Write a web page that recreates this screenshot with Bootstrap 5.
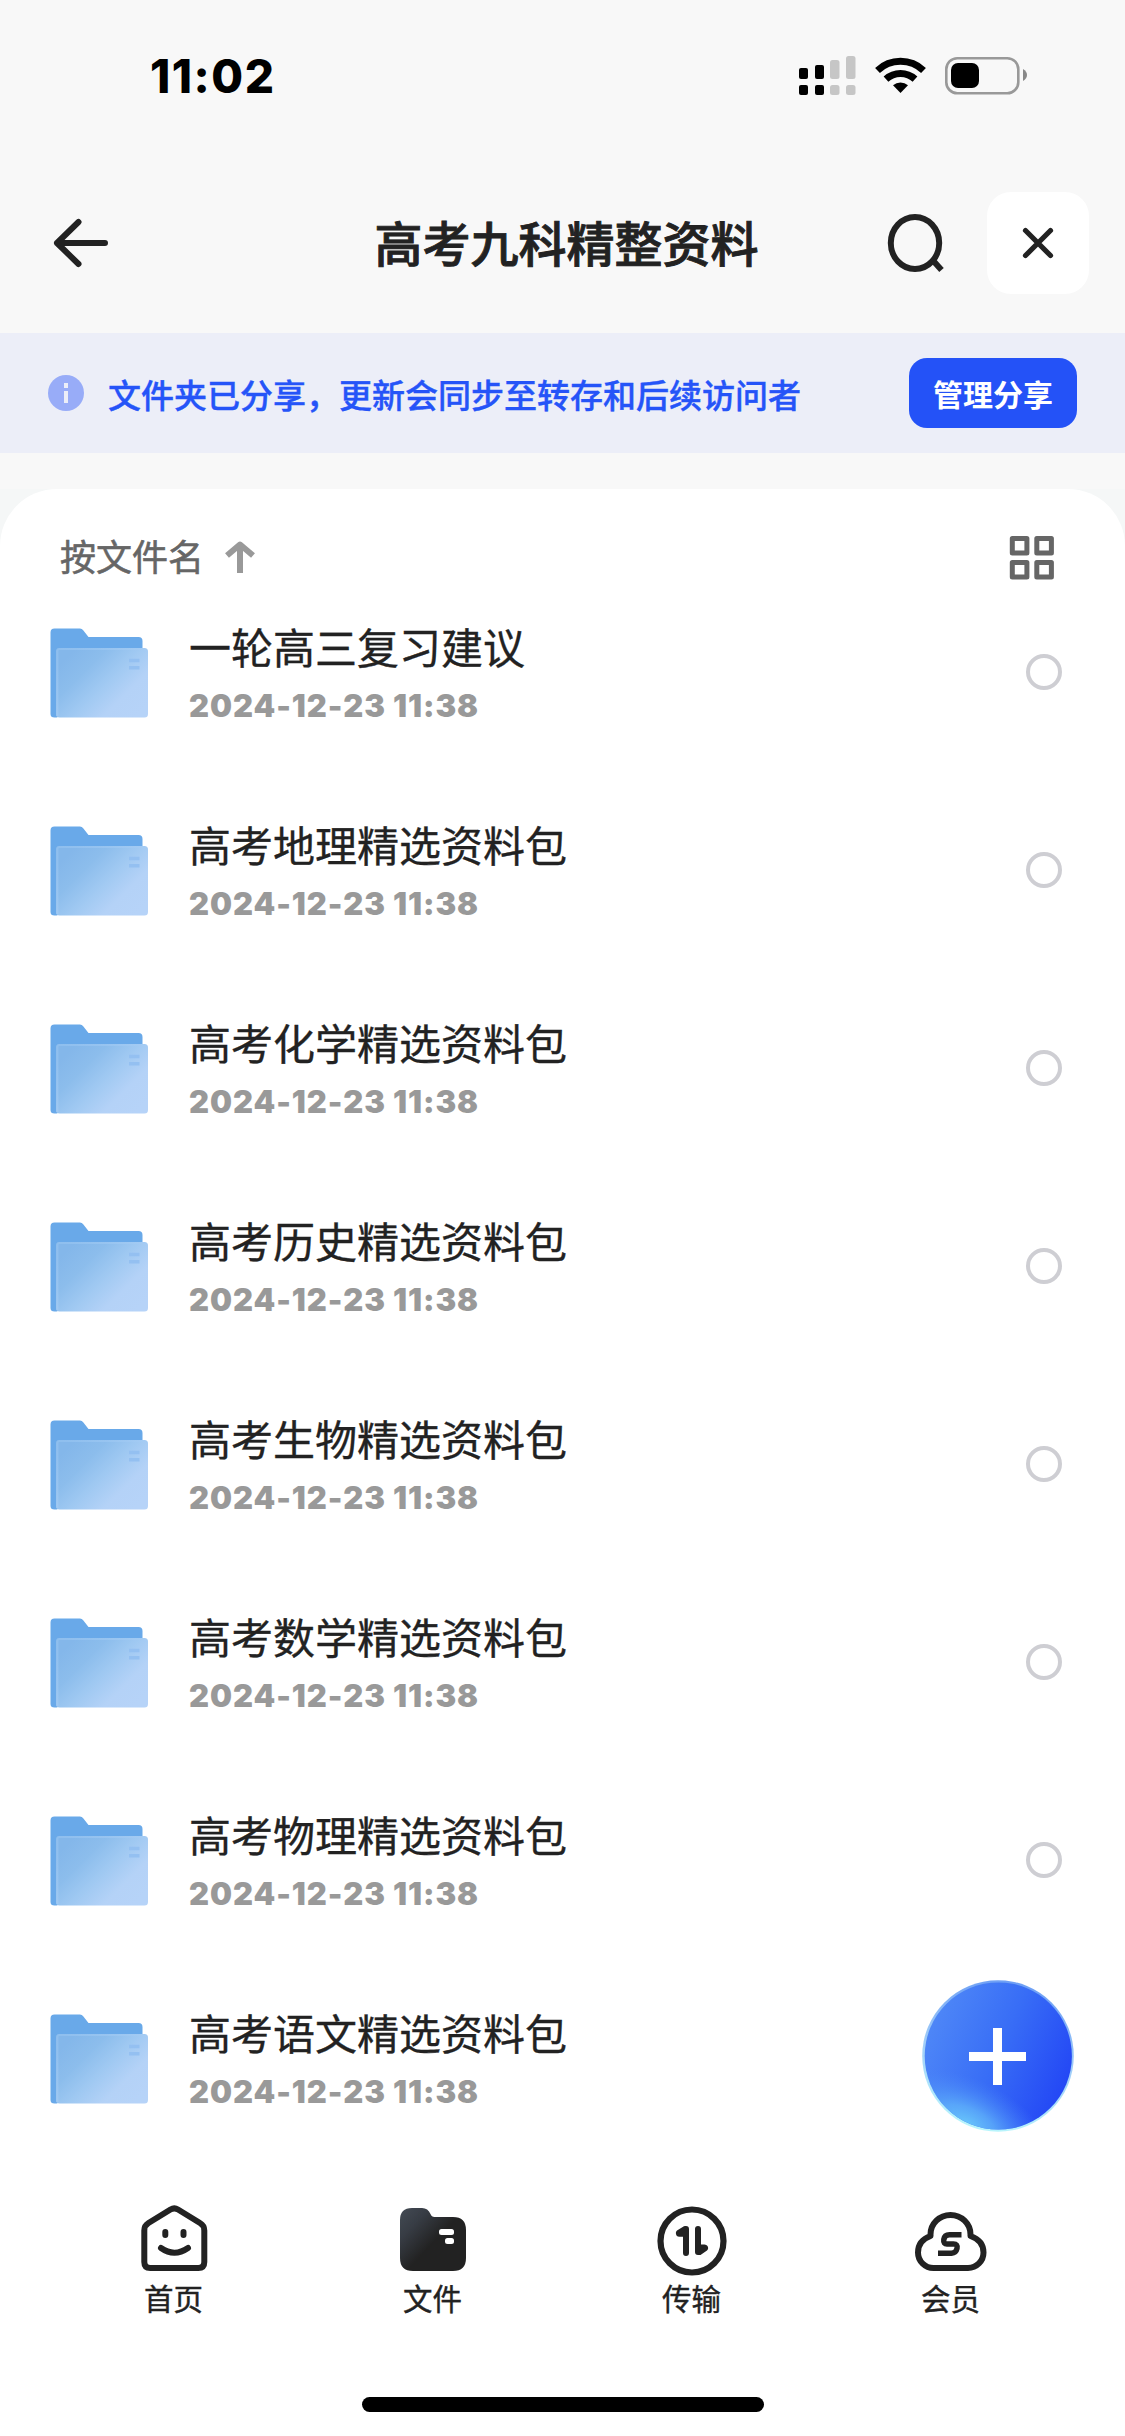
<!DOCTYPE html>
<html lang="zh-CN">
<head>
<meta charset="utf-8">
<meta name="viewport" content="width=device-width, initial-scale=1">
<title>高考九科精整资料</title>
<link href="https://cdn.jsdelivr.net/npm/bootstrap@5.3.0/dist/css/bootstrap.min.css" rel="stylesheet">
<style>
  body { font-family: "Noto Sans CJK SC", sans-serif; color: #222; background: #f8f8f8; }
  svg { display: block; flex: none; }
  .screen { width: 1125px; height: 2436px; overflow: hidden; }
  .status-bar { height: 153px; padding: 0 97px 0 150px; }
  .clock { font: 800 46px/60px Inter, sans-serif; color: #000; letter-spacing: 1.5px; padding-top: 46px; }
  .status-icons { height: 100px; padding-top: 52px; }
  .title-bar { height: 180px; padding: 0 36px 0 48px; }
  .title-text { font-size: 48px; line-height: 60px; font-weight: 500; margin-top: -5px; -webkit-text-stroke: .9px; }
  .close-btn { width: 102px; height: 102px; border-radius: 24px; }
  .side { width: 260px; }
  .side-right { width: 264px; }
  .share-bar { height: 120px; background: #eceef8; padding: 0 48px; color: #2554f8; }
  .share-text { font-size: 33px; line-height: 48px; font-weight: 500; margin: 1px 0 0 24px; -webkit-text-stroke: .4px; }
  .share-btn, .share-btn:hover { width: 168px; height: 70px; border-radius: 18px; background: #2452f7; color: #fff; border: 0; padding: 0; font-size: 30px; line-height: 64px; font-weight: 700; }
  .panel-wrap { margin-top: 36px; background: #f5f7f7; }
  .panel { border-radius: 57px 57px 0 0; height: 1947px; }
  .sort-bar { height: 85px; padding: 42px 70px 0 60px; }
  .sort-text { font-size: 36px; line-height: 48px; color: #666; margin-right: 19px; -webkit-text-stroke: .6px; }
  .file-row { height: 198px; padding: 0 63px 0 50px; }
  .file-text { margin-left: 41px; padding-top: 45px; }
  .file-name { font-size: 42px; line-height: 54px; color: #222; -webkit-text-stroke: .35px; }
  .file-date { font: 900 31px/36px Inter, sans-serif; color: #999; letter-spacing: .95px; margin-top: 15px; }
  .pick { width: 36px; height: 36px; border: 4px solid #ceced3; margin-top: -2px; }
  .fab { left: 922px; top: 1980px; }
  .tab-bar { padding: 0 45px 0 44px; }
  .tab { width: 259px; padding-top: 44px; }
  .tab-label { font-size: 29.500px; line-height: 40px; margin-top: -3px; -webkit-text-stroke: .4px; }
  .home-line { width: 402px; height: 15px; margin: 80px auto 0; }
</style>
</head>
<body>
<svg width="0" height="0" class="position-absolute">
  <defs>
    <linearGradient id="front" gradientUnits="userSpaceOnUse" x1="20" y1="26" x2="84" y2="90">
      <stop offset="0" stop-color="#84b7ea"/><stop offset=".25" stop-color="#8cbdec"/><stop offset=".5" stop-color="#a0c9f2"/><stop offset=".75" stop-color="#b4d2f7"/><stop offset="1" stop-color="#b6d3f8"/>
    </linearGradient>
    <linearGradient id="edge" x1="0" y1="0" x2="1" y2="1">
      <stop offset="0" stop-color="#93c2f0"/><stop offset="1" stop-color="#b4d4f7"/>
    </linearGradient>
    <symbol id="folder" viewBox="0 0 98 90">
      <path d="M4.500 .5H30q2 0 3.200 1.700L38.500 9H88.500q4 0 4 4V60L6.500 89.500H4.500Q.5 89.500 .5 86V4.500Q.5 .5 4.500 .5Z" fill="#69a9e9"/>
      <rect x="6" y="20" width="92" height="69.500" rx="3.500" fill="url(#front)"/>
      <path d="M7.300 88V23q0-2 2-2H95" fill="none" stroke="url(#edge)" stroke-width="2.200" opacity=".7"/>
      <path d="M79 32.500H89.500M79 39.800H89.500" stroke="#94c0f1" stroke-width="3.400"/>
    </symbol>
  </defs>
</svg>
<main class="screen position-relative">
  <div class="status-bar d-flex justify-content-between align-items-start">
    <div class="clock">11:02</div>
    <svg class="status-icons" width="229" height="100" viewBox="799 52 229 48">
      <g><rect x="799" y="68" width="9" height="11" rx="2"/><rect x="815" y="65" width="9" height="14" rx="2"/><rect x="799" y="85" width="9" height="10" rx="2"/><rect x="815" y="85" width="9" height="10" rx="2"/></g>
      <g fill="#c6c6c6"><rect x="830" y="60" width="9.500" height="19" rx="2.500"/><rect x="846" y="56" width="9.500" height="23" rx="2.500"/><rect x="830" y="85" width="9.500" height="10" rx="2.500"/><rect x="846" y="85" width="9.500" height="10" rx="2.500"/></g>
      <path d="M877.500 70.500a33.500 33.500 0 0 1 46 0M886 79.200a21.500 21.500 0 0 1 29 0" fill="none" stroke="#000" stroke-width="7"/>
      <path d="M900.500 93l-7.500-7.700a11.500 11.500 0 0 1 15 0z"/>
      <rect x="946.300" y="58.200" width="72" height="35" rx="11" fill="none" stroke="#999" stroke-width="2.600"/>
      <rect x="951" y="63" width="28" height="25" rx="7"/>
      <path d="M1023 69q4 2.500 4 6t-4 6z" fill="#888"/>
    </svg>
  </div>

  <header class="title-bar d-flex align-items-center justify-content-between">
    <div class="side">
      <svg width="66" height="60" viewBox="48 213 66 60" fill="none" stroke="#222" stroke-width="6" stroke-linecap="round" stroke-linejoin="round"><path d="M105 243H57M78.500 222L57 243L78.500 264"/></svg>
    </div>
    <div class="title-text text-nowrap">高考九科精整资料</div>
    <div class="side-right d-flex align-items-center justify-content-end">
      <svg width="104" height="66" viewBox="883 210 104 66" fill="none" stroke="#222" stroke-width="6"><ellipse cx="915" cy="243" rx="24.200" ry="26"/><path d="M933 260.500L941.500 270"/></svg>
      <div class="close-btn bg-white d-flex align-items-center justify-content-center">
        <svg width="36" height="36" viewBox="0 0 36 36" stroke="#222" stroke-width="5.200" stroke-linecap="round"><path d="M5.500 5.500L30.500 30.500M30.500 5.500L5.500 30.500"/></svg>
      </div>
    </div>
  </header>

  <section class="share-bar d-flex align-items-center">
    <svg width="36" height="36" viewBox="0 0 36 36"><circle cx="18" cy="18" r="18" fill="#98acf8"/><path d="M16 8h4v5h-4zM16 16h4v12h-4z" fill="#eceef8"/></svg>
    <div class="share-text text-nowrap">文件夹已分享，更新会同步至转存和后续访问者</div>
    <button type="button" class="btn share-btn ms-auto">管理分享</button>
  </section>

  <div class="panel-wrap">
    <div class="panel bg-white">
      <div class="sort-bar d-flex align-items-start">
        <div class="sort-text">按文件名</div>
        <svg class="mt-2" width="34" height="36" viewBox="0 0 34 36" fill="none" stroke="#999" stroke-width="6"><path d="M17 34V6"/><path d="M4 16.500L17 5.500L30 16.500" stroke-linejoin="round"/></svg>
        <svg class="ms-auto" width="46" height="54" viewBox="0 0 46 54" fill="none" stroke="#666" stroke-width="5"><path d="M3.300 7.500h14.600v14.600H3.300zM27.800 7.500h14.600v14.600H27.800zM3.300 31.500h14.600v14.600H3.300zM27.800 31.500h14.600v14.600H27.800z" stroke-linejoin="round"/></svg>
      </div>
      <div id="files"></div>
      <nav class="tab-bar d-flex">
        <div class="tab d-flex flex-column align-items-center">
          <svg width="78" height="78" viewBox="135 2202 78 78" fill="none" stroke="#222" stroke-width="6" stroke-linecap="round" stroke-linejoin="round"><path d="M170.500 2209.500Q174.300 2207.300 178 2209.500L200 2223Q204.300 2225.500 204.300 2230.500V2262Q204.300 2268 198.300 2268H150.300Q144.300 2268 144.300 2262V2230.500Q144.300 2225.500 148.500 2223Z"/><path d="M165.300 2232v3M183.500 2232v3M161 2248q13.300 9.500 27 0"/></svg>
          <div class="tab-label">首页</div>
        </div>
        <div class="tab d-flex flex-column align-items-center">
          <svg width="78" height="78" viewBox="394 2202 78 78"><defs><linearGradient id="dark" x1="0" y1=".1" x2=".5" y2=".55"><stop offset="0" stop-color="#414851"/><stop offset=".4" stop-color="#373c44"/><stop offset="1" stop-color="#222"/></linearGradient></defs><path d="M412 2208h10q6 0 8.500 6q1 3 4 3h18.500q13 0 13 13v28q0 13-13 13h-40q-13 0-13-13v-38q0-12 12-12z" fill="url(#dark)"/><rect x="439" y="2229" width="15" height="6" rx="2.500" fill="#fff"/><rect x="445" y="2238" width="9" height="6" rx="2.500" fill="#fff"/></svg>
          <div class="tab-label">文件</div>
        </div>
        <div class="tab d-flex flex-column align-items-center">
          <svg width="78" height="78" viewBox="653 2202 78 78"><circle cx="692" cy="2241" r="31.500" fill="none" stroke="#222" stroke-width="6.200"/><g fill="none" stroke="#222" stroke-width="6" stroke-linecap="round"><path d="M686 2229V2253M698 2229V2252"/></g><path d="M683.500 2226.500L677 2230.500Q675 2232.500 676.500 2235.500Q677.500 2236.800 679.500 2236.800H686V2226ZM700.500 2255L707 2250.500Q709 2248.500 707.500 2246Q706.500 2244.500 704.500 2244.500H698V2255Z" fill="#222"/></svg>
          <div class="tab-label">传输</div>
        </div>
        <div class="tab d-flex flex-column align-items-center">
          <svg width="78" height="78" viewBox="912 2202 78 78" fill="none" stroke="#222"><path d="M934 2268H968A15.500 15.500 0 0 0 983.500 2252.500Q983.500 2240.500 970.500 2236V2234.500A20 19.500 0 0 0 930.500 2234.500V2236Q918 2240.500 918 2252.500A15.500 15.500 0 0 0 934 2268Z" stroke-width="6" stroke-linejoin="round"/><path d="M961.500 2234.700H949.500Q944.500 2234.700 943.800 2239.500T947.500 2244H953.500Q958 2244 957 2248.500T951.500 2253.300H938" stroke-width="5.500"/></svg>
          <div class="tab-label">会员</div>
        </div>
      </nav>
      <div class="home-line bg-black rounded-pill"></div>
    </div>
  </div>

  <svg class="fab position-absolute" width="152" height="152" viewBox="0 0 152 152">
    <defs>
      <linearGradient id="fabBase" x1="0" y1=".25" x2="1" y2=".7"><stop offset="0" stop-color="#5089f7"/><stop offset=".5" stop-color="#386df6"/><stop offset="1" stop-color="#2245f5"/></linearGradient>
      <radialGradient id="fabGlow" gradientUnits="userSpaceOnUse" cx="0" cy="0" r="1" gradientTransform="translate(44 144) rotate(24) scale(88 46)"><stop offset="0" stop-color="#68c6fb"/><stop offset=".35" stop-color="#5fb2fa" stop-opacity=".8"/><stop offset="1" stop-color="#4a86f8" stop-opacity="0"/></radialGradient>
      <linearGradient id="fabRim" x1=".6" y1="0" x2=".4" y2="1"><stop offset="0" stop-color="#6c9ef5"/><stop offset=".5" stop-color="#a0cdf8"/><stop offset="1" stop-color="#b9f6fc"/></linearGradient>
    </defs>
    <circle cx="76" cy="76" r="75.800" fill="url(#fabRim)"/>
    <circle cx="76.300" cy="76" r="73.600" fill="url(#fabBase)"/>
    <circle cx="76.300" cy="76" r="73.600" fill="url(#fabGlow)"/>
    <path d="M75.500 48V105M47 76.500H104" stroke="#fff" stroke-width="9"/>
  </svg>
</main>
<script src="https://cdn.jsdelivr.net/npm/bootstrap@5.3.0/dist/js/bootstrap.bundle.min.js"></script>
<script>
  const names = ["一轮高三复习建议", "高考地理精选资料包", "高考化学精选资料包", "高考历史精选资料包", "高考生物精选资料包", "高考数学精选资料包", "高考物理精选资料包", "高考语文精选资料包"];
  document.getElementById("files").innerHTML = names.map((name, i) => `
    <div class="file-row d-flex">
      <svg class="align-self-center" width="98" height="90"><use href="#folder"/></svg>
      <div class="file-text"><div class="file-name">${name}</div><div class="file-date">2024-12-23 11:38</div></div>
      ${i < 7 ? '<div class="pick rounded-circle ms-auto align-self-center"></div>' : ''}
    </div>`).join("");
</script>
</body>
</html>
